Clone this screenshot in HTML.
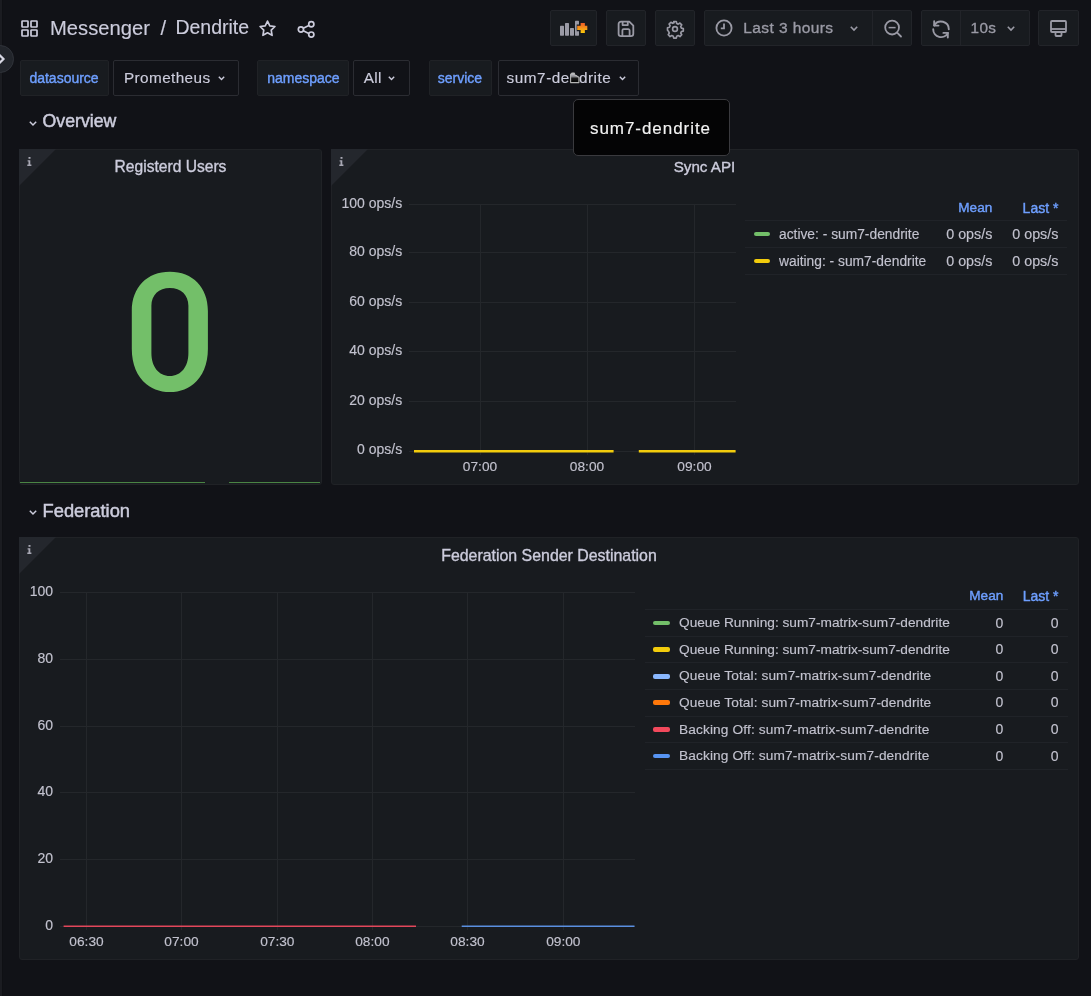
<!DOCTYPE html><html><head><meta charset="utf-8"><style>
html,body{margin:0;padding:0;width:1091px;height:996px;overflow:hidden;background:#111217;font-family:"Liberation Sans", sans-serif;}
svg{position:absolute;overflow:visible}
</style></head><body><div style="position:absolute;left:0;top:0;width:1091px;height:996px;will-change:transform">
<div style="position:absolute;left:0px;top:0px;width:2px;height:996px;background:#1b1c21;border-radius:0px;box-sizing:border-box;"></div>
<div style="position:absolute;left:2px;top:0px;width:1px;height:996px;background:#0f1014;border-radius:0px;box-sizing:border-box;"></div>
<div style="position:absolute;left:-13.8px;top:45px;width:27.6px;height:27.6px;border-radius:50%;background:#22252b;border:1px solid #30333a;box-sizing:border-box"></div>
<svg style="left:0;top:52px" width="8" height="14" viewBox="0 0 8 14"><path d="M-1 2.5 L3.5 7 L-1 11.5" fill="none" stroke="#d8d8e4" stroke-width="2.2"/></svg>
<svg style="left:21px;top:20px" width="17" height="17" viewBox="0 0 17 17" fill="none" stroke="#ccccdc" stroke-width="1.7"><rect x="1" y="1" width="6" height="6" rx=".5"/><rect x="10" y="1" width="6" height="6" rx=".5"/><rect x="1" y="10" width="6" height="6" rx=".5"/><rect x="10" y="10" width="6" height="6" rx=".5"/></svg>
<div style="position:absolute;top:17.70px;font-size:20.2px;line-height:20.2px;color:#ccccdc;white-space:nowrap;font-weight:400;-webkit-text-stroke:0.15px #ccccdc;left:50px;">Messenger</div>
<div style="position:absolute;top:17.70px;font-size:20.2px;line-height:20.2px;color:#ccccdc;white-space:nowrap;font-weight:400;-webkit-text-stroke:0.15px #ccccdc;left:160.5px;">/</div>
<div style="position:absolute;top:18.29px;font-size:19.5px;line-height:19.5px;color:#ccccdc;white-space:nowrap;font-weight:400;-webkit-text-stroke:0.15px #ccccdc;left:175.4px;">Dendrite</div>
<svg style="left:258px;top:19px" width="19" height="19" viewBox="0 0 24 24"><path d="M12 2.6l2.9 6 6.5.9-4.7 4.6 1.1 6.5L12 17.5l-5.8 3.1 1.1-6.5-4.7-4.6 6.5-.9z" fill="none" stroke="#ccccdc" stroke-width="2.1" stroke-linejoin="round"/></svg>
<svg style="left:297.3px;top:19.5px" width="19" height="19" viewBox="0 0 19 19" fill="none" stroke="#ccccdc" stroke-width="1.7"><circle cx="14.3" cy="4.3" r="2.6"/><circle cx="3.9" cy="9.5" r="2.6"/><circle cx="14.3" cy="14.6" r="2.6"/><path d="M6.3 8.2 L11.8 5.6 M6.3 10.8 L11.8 13.4"/></svg>
<div style="position:absolute;left:550px;top:10px;width:47px;height:35.5px;background:#181b1f;border-radius:2px;box-sizing:border-box;border:1px solid #222429;"></div>
<div style="position:absolute;left:606px;top:10px;width:40px;height:35.5px;background:#181b1f;border-radius:2px;box-sizing:border-box;border:1px solid #222429;"></div>
<div style="position:absolute;left:655px;top:10px;width:40px;height:35.5px;background:#181b1f;border-radius:2px;box-sizing:border-box;border:1px solid #222429;"></div>
<div style="position:absolute;left:704px;top:10px;width:208px;height:35.5px;background:#181b1f;border-radius:2px;box-sizing:border-box;border:1px solid #222429;"></div>
<div style="position:absolute;left:872px;top:10px;width:1px;height:35.5px;background:#222429"></div>
<div style="position:absolute;left:921px;top:10px;width:109px;height:35.5px;background:#181b1f;border-radius:2px;box-sizing:border-box;border:1px solid #222429;"></div>
<div style="position:absolute;left:960px;top:10px;width:1px;height:35.5px;background:#222429"></div>
<div style="position:absolute;left:1038px;top:10px;width:40.5px;height:35.5px;background:#181b1f;border-radius:2px;box-sizing:border-box;border:1px solid #222429;"></div>
<svg style="left:559px;top:20px" width="30" height="18" viewBox="0 0 30 18"><defs><linearGradient id="og" x1="0" y1="0" x2="0" y2="1"><stop offset="0" stop-color="#f05a28"/><stop offset="1" stop-color="#fbca0a"/></linearGradient></defs><rect x="1" y="5.8" width="4" height="9.9" rx=".6" fill="#9a9aa5"/><rect x="6" y="2.9" width="4" height="12.8" rx=".6" fill="#9a9aa5"/><rect x="11" y="8" width="4" height="7.7" rx=".6" fill="#9a9aa5"/><rect x="16" y="0.7" width="4" height="15" rx=".6" fill="#9a9aa5"/><path d="M23.75 1.4v12.1M17.7 7.9h12.1" stroke="#181b1f" stroke-width="6.6"/><path d="M23.75 2.9v10M18.2 7.9h10.1" stroke="url(#og)" stroke-width="4.2"/></svg>
<svg style="left:617px;top:19.8px" width="18" height="18" viewBox="0 0 18 18" fill="none" stroke="#9a9aa5" stroke-width="1.8" stroke-linejoin="round"><path d="M4 1.6H12.3L16.3 5.6V13.8A2.4 2.4 0 0 1 13.9 16.2H4A2.4 2.4 0 0 1 1.6 13.8V4A2.4 2.4 0 0 1 4 1.6Z"/><path d="M5.6 1.6V5.1H10.8V1.6"/><path d="M5.4 16.2V10.4A1.2 1.2 0 0 1 6.6 9.2H11.4A1.2 1.2 0 0 1 12.6 10.4V16.2"/></svg>
<svg style="left:665.5px;top:19.5px" width="18" height="18" viewBox="0 0 24 24" fill="none" stroke="#9a9aa5" stroke-width="2.2" stroke-linejoin="round"><circle cx="12" cy="12" r="3.2"/><path d="M10.3 2h3.4l.6 2.6 2 .9 2.3-1.4 2.4 2.4-1.4 2.3.9 2 2.6.6v3.4l-2.6.6-.9 2 1.4 2.3-2.4 2.4-2.3-1.4-2 .9-.6 2.6h-3.4l-.6-2.6-2-.9-2.3 1.4-2.4-2.4 1.4-2.3-.9-2L2 13.7v-3.4l2.6-.6.9-2-1.4-2.3 2.4-2.4 2.3 1.4 2-.9z"/></svg>
<svg style="left:715px;top:19.3px" width="18" height="18" viewBox="0 0 18 18" fill="none" stroke="#9a9aa5" stroke-width="1.8"><circle cx="9" cy="9" r="7.6"/><path d="M9 4.5v4.8H5.8"/></svg>
<div style="position:absolute;top:19.88px;font-size:15.5px;line-height:15.5px;color:#9a9aa5;white-space:nowrap;font-weight:400;-webkit-text-stroke:0.35px #9a9aa5;left:743.2px;letter-spacing:0.42px;">Last 3 hours</div>
<svg style="left:850px;top:25.5px" width="8" height="5.0" viewBox="0 0 8 5.0"><path d="M0.8 0.8 L4.0 4.0 L7.2 0.8" fill="none" stroke="#9a9aa5" stroke-width="1.6"/></svg>
<svg style="left:883.5px;top:20px" width="18" height="18" viewBox="0 0 18 18" fill="none" stroke="#9a9aa5" stroke-width="1.8"><circle cx="8.1" cy="7.6" r="6.9"/><path d="M4.6 7.6h7" stroke-width="1.5"/><path d="M13.1 12.6L17 16.5" stroke-linecap="round"/></svg>
<svg style="left:928px;top:16.5px" width="26" height="26" viewBox="0 0 26 26" fill="none" stroke="#9a9aa5" stroke-width="1.9" stroke-linecap="round" stroke-linejoin="round"><path d="M6.25 8.4A7.8 7.8 0 0 1 20.8 12.3"/><path d="M6.2 4.2V8.6H10.5"/><path d="M5.2 12.3A7.8 7.8 0 0 0 19.89 15.96"/><path d="M15.4 15.9H19.8V20.5"/></svg>
<div style="position:absolute;top:20.45px;font-size:15.3px;line-height:15.3px;color:#9a9aa5;white-space:nowrap;font-weight:400;-webkit-text-stroke:0.35px #9a9aa5;left:970.5px;letter-spacing:0.4px;">10s</div>
<svg style="left:1006.5px;top:25.5px" width="8" height="5.0" viewBox="0 0 8 5.0"><path d="M0.8 0.8 L4.0 4.0 L7.2 0.8" fill="none" stroke="#9a9aa5" stroke-width="1.6"/></svg>
<svg style="left:1050px;top:19.5px" width="17" height="17" viewBox="0 0 17 17" fill="none" stroke="#9a9aa5" stroke-width="1.8" stroke-linejoin="round"><rect x="1" y="1" width="15" height="11" rx="1"/><path d="M1 9h15"/><rect x="5.5" y="12" width="6" height="4" rx=".8"/></svg>
<div style="position:absolute;left:19.5px;top:60px;width:89.0px;height:36px;background:#181b1f;border-radius:2px;box-sizing:border-box;border:1px solid #202226;"></div>
<div style="position:absolute;top:70.55px;font-size:14px;line-height:14px;color:#6e9fff;white-space:nowrap;font-weight:400;-webkit-text-stroke:0.4px #6e9fff;left:29.4px;">datasource</div>
<div style="position:absolute;left:113.4px;top:60px;width:125.6px;height:36px;background:#111217;border-radius:2px;box-sizing:border-box;border:1px solid #2b2c32;"></div>
<div style="position:absolute;top:70.15px;font-size:15.3px;line-height:15.3px;color:#ccccdc;white-space:nowrap;font-weight:400;-webkit-text-stroke:0.15px #ccccdc;left:124px;letter-spacing:0.4px;">Prometheus</div>
<svg style="left:218px;top:75.5px" width="7" height="4.5" viewBox="0 0 7 4.5"><path d="M0.8 0.8 L3.5 3.5 L6.2 0.8" fill="none" stroke="#ccccdc" stroke-width="1.4"/></svg>
<div style="position:absolute;left:257.3px;top:60px;width:91.69999999999999px;height:36px;background:#181b1f;border-radius:2px;box-sizing:border-box;border:1px solid #202226;"></div>
<div style="position:absolute;top:70.55px;font-size:14px;line-height:14px;color:#6e9fff;white-space:nowrap;font-weight:400;-webkit-text-stroke:0.4px #6e9fff;left:267.2px;">namespace</div>
<div style="position:absolute;left:353.4px;top:60px;width:56.60000000000002px;height:36px;background:#111217;border-radius:2px;box-sizing:border-box;border:1px solid #2b2c32;"></div>
<div style="position:absolute;top:70.15px;font-size:15.3px;line-height:15.3px;color:#ccccdc;white-space:nowrap;font-weight:400;-webkit-text-stroke:0.15px #ccccdc;left:363.7px;letter-spacing:0.35px;">All</div>
<svg style="left:388px;top:75.5px" width="7" height="4.5" viewBox="0 0 7 4.5"><path d="M0.8 0.8 L3.5 3.5 L6.2 0.8" fill="none" stroke="#ccccdc" stroke-width="1.4"/></svg>
<div style="position:absolute;left:428.5px;top:60px;width:63.5px;height:36px;background:#181b1f;border-radius:2px;box-sizing:border-box;border:1px solid #202226;"></div>
<div style="position:absolute;top:70.55px;font-size:14px;line-height:14px;color:#6e9fff;white-space:nowrap;font-weight:400;-webkit-text-stroke:0.4px #6e9fff;left:437.7px;">service</div>
<div style="position:absolute;left:497.5px;top:60px;width:141.10000000000002px;height:36px;background:#111217;border-radius:2px;box-sizing:border-box;border:1px solid #2b2c32;"></div>
<div style="position:absolute;top:70.15px;font-size:15.3px;line-height:15.3px;color:#ccccdc;white-space:nowrap;font-weight:400;-webkit-text-stroke:0.15px #ccccdc;left:506.6px;letter-spacing:0.54px;">sum7-dendrite</div>
<svg style="left:618.5px;top:75.5px" width="7" height="4.5" viewBox="0 0 7 4.5"><path d="M0.8 0.8 L3.5 3.5 L6.2 0.8" fill="none" stroke="#ccccdc" stroke-width="1.4"/></svg>
<svg style="left:29px;top:120.7px" width="8" height="5.0" viewBox="0 0 8 5.0"><path d="M0.8 0.8 L4.0 4.0 L7.2 0.8" fill="none" stroke="#ccccdc" stroke-width="1.5"/></svg>
<div style="position:absolute;top:112.72px;font-size:17.7px;line-height:17.7px;color:#ccccdc;white-space:nowrap;font-weight:400;-webkit-text-stroke:0.5px #ccccdc;left:42.6px;">Overview</div>
<svg style="left:29px;top:510.29999999999995px" width="8" height="5.0" viewBox="0 0 8 5.0"><path d="M0.8 0.8 L4.0 4.0 L7.2 0.8" fill="none" stroke="#ccccdc" stroke-width="1.5"/></svg>
<div style="position:absolute;top:501.81px;font-size:18.3px;line-height:18.3px;color:#ccccdc;white-space:nowrap;font-weight:400;-webkit-text-stroke:0.5px #ccccdc;left:42.6px;">Federation</div>
<div style="position:absolute;left:19px;top:149px;width:303px;height:336px;background:#181b1f;border-radius:3px;box-sizing:border-box;border:1px solid #202226;"></div>
<svg style="left:19px;top:149px" width="37" height="37" viewBox="0 0 37 37"><path d="M0 0H37L0 37Z" fill="#24272d"/></svg>
<svg style="left:27px;top:157px" width="5" height="9" viewBox="0 0 5 9" fill="#a8a8b4"><rect x="1.5" y="0" width="2" height="1.8"/><path d="M0.6 3.2h2.7v4.4h1.1V9H0.3V7.6h1.2V4.5h-.9z"/></svg>
<div style="position:absolute;left:331px;top:149px;width:748px;height:336px;background:#181b1f;border-radius:3px;box-sizing:border-box;border:1px solid #202226;"></div>
<svg style="left:331px;top:149px" width="37" height="37" viewBox="0 0 37 37"><path d="M0 0H37L0 37Z" fill="#24272d"/></svg>
<svg style="left:339px;top:157px" width="5" height="9" viewBox="0 0 5 9" fill="#a8a8b4"><rect x="1.5" y="0" width="2" height="1.8"/><path d="M0.6 3.2h2.7v4.4h1.1V9H0.3V7.6h1.2V4.5h-.9z"/></svg>
<div style="position:absolute;left:19px;top:537px;width:1060px;height:423px;background:#181b1f;border-radius:3px;box-sizing:border-box;border:1px solid #202226;"></div>
<svg style="left:19px;top:537px" width="37" height="37" viewBox="0 0 37 37"><path d="M0 0H37L0 37Z" fill="#24272d"/></svg>
<svg style="left:27px;top:545px" width="5" height="9" viewBox="0 0 5 9" fill="#a8a8b4"><rect x="1.5" y="0" width="2" height="1.8"/><path d="M0.6 3.2h2.7v4.4h1.1V9H0.3V7.6h1.2V4.5h-.9z"/></svg>
<div style="position:absolute;top:159.29px;font-size:15.6px;line-height:15.6px;color:#ccccdc;white-space:nowrap;font-weight:400;-webkit-text-stroke:0.35px #ccccdc;left:-129.5px;width:600px;text-align:center;">Registerd Users</div>
<div style="position:absolute;top:158.93px;font-size:15.2px;line-height:15.2px;color:#ccccdc;white-space:nowrap;font-weight:400;-webkit-text-stroke:0.35px #ccccdc;left:404.5px;width:600px;text-align:center;">Sync API</div>
<div style="position:absolute;top:547.84px;font-size:15.9px;line-height:15.9px;color:#ccccdc;white-space:nowrap;font-weight:400;-webkit-text-stroke:0.35px #ccccdc;left:249px;width:600px;text-align:center;">Federation Sender Destination</div>
<svg style="left:0;top:0" width="1091" height="996" viewBox="0 0 1091 996"><path fill-rule="evenodd" fill="#73bf69" d="M169.85 271.80C192.68 271.80 207.90 287.48 207.90 311.00V349.00C207.90 374.86 192.68 392.10 169.85 392.10C147.02 392.10 131.80 374.86 131.80 349.00V311.00C131.80 287.48 147.02 271.80 169.85 271.80ZM169.90 288.00C181.00 288.00 188.40 295.08 188.40 305.70V353.10C188.40 366.90 181.00 376.10 169.90 376.10C158.80 376.10 151.40 366.90 151.40 353.10V305.70C151.40 295.08 158.80 288.00 169.90 288.00Z"/></svg>
<div style="position:absolute;left:20px;top:482px;width:185px;height:1px;background:#4a8444"></div>
<div style="position:absolute;left:229px;top:482px;width:91px;height:1px;background:#4a8444"></div>
<svg style="left:0;top:0" width="1091" height="996" viewBox="0 0 1091 996" shape-rendering="crispEdges"><line x1="409" x2="736" y1="204.5" y2="204.5" stroke="#24272b" stroke-width="1"/><line x1="409" x2="736" y1="252.5" y2="252.5" stroke="#24272b" stroke-width="1"/><line x1="409" x2="736" y1="302.5" y2="302.5" stroke="#24272b" stroke-width="1"/><line x1="409" x2="736" y1="351.5" y2="351.5" stroke="#24272b" stroke-width="1"/><line x1="409" x2="736" y1="401.5" y2="401.5" stroke="#24272b" stroke-width="1"/><line x1="409" x2="736" y1="451.0" y2="451.0" stroke="#24272b" stroke-width="1"/><line x1="480.5" x2="480.5" y1="204" y2="455" stroke="#24272b" stroke-width="1"/><line x1="587.5" x2="587.5" y1="204" y2="455" stroke="#24272b" stroke-width="1"/><line x1="694.5" x2="694.5" y1="204" y2="455" stroke="#24272b" stroke-width="1"/></svg>
<div style="position:absolute;top:195.55px;font-size:14px;line-height:14px;color:#c2c2ce;white-space:nowrap;font-weight:400;-webkit-text-stroke:0.15px #c2c2ce;right:688.8px;text-align:right;">100 ops/s</div>
<div style="position:absolute;top:243.55px;font-size:14px;line-height:14px;color:#c2c2ce;white-space:nowrap;font-weight:400;-webkit-text-stroke:0.15px #c2c2ce;right:688.8px;text-align:right;">80 ops/s</div>
<div style="position:absolute;top:293.55px;font-size:14px;line-height:14px;color:#c2c2ce;white-space:nowrap;font-weight:400;-webkit-text-stroke:0.15px #c2c2ce;right:688.8px;text-align:right;">60 ops/s</div>
<div style="position:absolute;top:342.55px;font-size:14px;line-height:14px;color:#c2c2ce;white-space:nowrap;font-weight:400;-webkit-text-stroke:0.15px #c2c2ce;right:688.8px;text-align:right;">40 ops/s</div>
<div style="position:absolute;top:392.55px;font-size:14px;line-height:14px;color:#c2c2ce;white-space:nowrap;font-weight:400;-webkit-text-stroke:0.15px #c2c2ce;right:688.8px;text-align:right;">20 ops/s</div>
<div style="position:absolute;top:442.05px;font-size:14px;line-height:14px;color:#c2c2ce;white-space:nowrap;font-weight:400;-webkit-text-stroke:0.15px #c2c2ce;right:688.8px;text-align:right;">0 ops/s</div>
<div style="position:absolute;top:460.00px;font-size:13.7px;line-height:13.7px;color:#c2c2ce;white-space:nowrap;font-weight:400;-webkit-text-stroke:0.15px #c2c2ce;left:180px;width:600px;text-align:center;">07:00</div>
<div style="position:absolute;top:460.00px;font-size:13.7px;line-height:13.7px;color:#c2c2ce;white-space:nowrap;font-weight:400;-webkit-text-stroke:0.15px #c2c2ce;left:287px;width:600px;text-align:center;">08:00</div>
<div style="position:absolute;top:460.00px;font-size:13.7px;line-height:13.7px;color:#c2c2ce;white-space:nowrap;font-weight:400;-webkit-text-stroke:0.15px #c2c2ce;left:394.5px;width:600px;text-align:center;">09:00</div>
<svg style="left:0;top:0" width="1091" height="996"><path d="M414 451.3H613.6M638.8 451.3H735.6" stroke="#f2cc0c" stroke-width="2.5"/></svg>
<div style="position:absolute;top:201.39px;font-size:13.6px;line-height:13.6px;color:#6e9fff;white-space:nowrap;font-weight:400;-webkit-text-stroke:0.4px #6e9fff;right:98.70000000000005px;text-align:right;">Mean</div>
<div style="position:absolute;top:200.85px;font-size:14px;line-height:14px;color:#6e9fff;white-space:nowrap;font-weight:400;-webkit-text-stroke:0.4px #6e9fff;right:32.59999999999991px;text-align:right;">Last *</div>
<div style="position:absolute;left:745px;top:219.7px;width:322px;height:1px;background:#202328"></div>
<div style="position:absolute;left:745px;top:247.1px;width:322px;height:1px;background:#202328"></div>
<div style="position:absolute;left:745px;top:274.0px;width:322px;height:1px;background:#202328"></div>
<div style="position:absolute;left:754px;top:231.8px;width:15.6px;height:4.4px;border-radius:2px;background:#73bf69"></div>
<div style="position:absolute;top:228.32px;font-size:13.8px;line-height:13.8px;color:#c2c2ce;white-space:nowrap;font-weight:400;-webkit-text-stroke:0.15px #c2c2ce;left:779px;">active: - sum7-dendrite</div>
<div style="position:absolute;top:226.90px;font-size:14.3px;line-height:14.3px;color:#c2c2ce;white-space:nowrap;font-weight:400;-webkit-text-stroke:0.15px #c2c2ce;right:98.70000000000005px;text-align:right;">0 ops/s</div>
<div style="position:absolute;top:226.90px;font-size:14.3px;line-height:14.3px;color:#c2c2ce;white-space:nowrap;font-weight:400;-webkit-text-stroke:0.15px #c2c2ce;right:32.59999999999991px;text-align:right;">0 ops/s</div>
<div style="position:absolute;left:754px;top:258.8px;width:15.6px;height:4.4px;border-radius:2px;background:#f2cc0c"></div>
<div style="position:absolute;top:255.32px;font-size:13.8px;line-height:13.8px;color:#c2c2ce;white-space:nowrap;font-weight:400;-webkit-text-stroke:0.15px #c2c2ce;left:779px;">waiting: - sum7-dendrite</div>
<div style="position:absolute;top:253.90px;font-size:14.3px;line-height:14.3px;color:#c2c2ce;white-space:nowrap;font-weight:400;-webkit-text-stroke:0.15px #c2c2ce;right:98.70000000000005px;text-align:right;">0 ops/s</div>
<div style="position:absolute;top:253.90px;font-size:14.3px;line-height:14.3px;color:#c2c2ce;white-space:nowrap;font-weight:400;-webkit-text-stroke:0.15px #c2c2ce;right:32.59999999999991px;text-align:right;">0 ops/s</div>
<svg style="left:0;top:0" width="1091" height="996" viewBox="0 0 1091 996" shape-rendering="crispEdges"><line x1="59.6" x2="635" y1="592.5" y2="592.5" stroke="#24272b" stroke-width="1"/><line x1="59.6" x2="635" y1="659.5" y2="659.5" stroke="#24272b" stroke-width="1"/><line x1="59.6" x2="635" y1="726.5" y2="726.5" stroke="#24272b" stroke-width="1"/><line x1="59.6" x2="635" y1="792.5" y2="792.5" stroke="#24272b" stroke-width="1"/><line x1="59.6" x2="635" y1="859.5" y2="859.5" stroke="#24272b" stroke-width="1"/><line x1="59.6" x2="635" y1="926.0" y2="926.0" stroke="#24272b" stroke-width="1"/><line x1="86.5" x2="86.5" y1="592" y2="930" stroke="#24272b" stroke-width="1"/><line x1="181.5" x2="181.5" y1="592" y2="930" stroke="#24272b" stroke-width="1"/><line x1="277.3" x2="277.3" y1="592" y2="930" stroke="#24272b" stroke-width="1"/><line x1="372.4" x2="372.4" y1="592" y2="930" stroke="#24272b" stroke-width="1"/><line x1="467.5" x2="467.5" y1="592" y2="930" stroke="#24272b" stroke-width="1"/><line x1="563.3" x2="563.3" y1="592" y2="930" stroke="#24272b" stroke-width="1"/></svg>
<div style="position:absolute;top:584.05px;font-size:14px;line-height:14px;color:#c2c2ce;white-space:nowrap;font-weight:400;-webkit-text-stroke:0.15px #c2c2ce;right:1038px;text-align:right;">100</div>
<div style="position:absolute;top:651.05px;font-size:14px;line-height:14px;color:#c2c2ce;white-space:nowrap;font-weight:400;-webkit-text-stroke:0.15px #c2c2ce;right:1038px;text-align:right;">80</div>
<div style="position:absolute;top:718.05px;font-size:14px;line-height:14px;color:#c2c2ce;white-space:nowrap;font-weight:400;-webkit-text-stroke:0.15px #c2c2ce;right:1038px;text-align:right;">60</div>
<div style="position:absolute;top:784.05px;font-size:14px;line-height:14px;color:#c2c2ce;white-space:nowrap;font-weight:400;-webkit-text-stroke:0.15px #c2c2ce;right:1038px;text-align:right;">40</div>
<div style="position:absolute;top:851.05px;font-size:14px;line-height:14px;color:#c2c2ce;white-space:nowrap;font-weight:400;-webkit-text-stroke:0.15px #c2c2ce;right:1038px;text-align:right;">20</div>
<div style="position:absolute;top:917.55px;font-size:14px;line-height:14px;color:#c2c2ce;white-space:nowrap;font-weight:400;-webkit-text-stroke:0.15px #c2c2ce;right:1038px;text-align:right;">0</div>
<div style="position:absolute;top:934.90px;font-size:13.7px;line-height:13.7px;color:#c2c2ce;white-space:nowrap;font-weight:400;-webkit-text-stroke:0.15px #c2c2ce;left:-213.5px;width:600px;text-align:center;">06:30</div>
<div style="position:absolute;top:934.90px;font-size:13.7px;line-height:13.7px;color:#c2c2ce;white-space:nowrap;font-weight:400;-webkit-text-stroke:0.15px #c2c2ce;left:-118.5px;width:600px;text-align:center;">07:00</div>
<div style="position:absolute;top:934.90px;font-size:13.7px;line-height:13.7px;color:#c2c2ce;white-space:nowrap;font-weight:400;-webkit-text-stroke:0.15px #c2c2ce;left:-22.69999999999999px;width:600px;text-align:center;">07:30</div>
<div style="position:absolute;top:934.90px;font-size:13.7px;line-height:13.7px;color:#c2c2ce;white-space:nowrap;font-weight:400;-webkit-text-stroke:0.15px #c2c2ce;left:72.39999999999998px;width:600px;text-align:center;">08:00</div>
<div style="position:absolute;top:934.90px;font-size:13.7px;line-height:13.7px;color:#c2c2ce;white-space:nowrap;font-weight:400;-webkit-text-stroke:0.15px #c2c2ce;left:167.5px;width:600px;text-align:center;">08:30</div>
<div style="position:absolute;top:934.90px;font-size:13.7px;line-height:13.7px;color:#c2c2ce;white-space:nowrap;font-weight:400;-webkit-text-stroke:0.15px #c2c2ce;left:263.29999999999995px;width:600px;text-align:center;">09:00</div>
<svg style="left:0;top:0" width="1091" height="996"><path d="M63.6 926.2H416" stroke="#e2475b" stroke-width="1.6"/><path d="M461.7 926.2H634.5" stroke="#5a8fe0" stroke-width="1.6"/></svg>
<div style="position:absolute;top:589.39px;font-size:13.6px;line-height:13.6px;color:#6e9fff;white-space:nowrap;font-weight:400;-webkit-text-stroke:0.4px #6e9fff;right:87.70000000000005px;text-align:right;">Mean</div>
<div style="position:absolute;top:588.85px;font-size:14px;line-height:14px;color:#6e9fff;white-space:nowrap;font-weight:400;-webkit-text-stroke:0.4px #6e9fff;right:32.5px;text-align:right;">Last *</div>
<div style="position:absolute;left:645px;top:609.2px;width:422.5px;height:1px;background:#202328"></div>
<div style="position:absolute;left:645px;top:635.8px;width:422.5px;height:1px;background:#202328"></div>
<div style="position:absolute;left:645px;top:662.4px;width:422.5px;height:1px;background:#202328"></div>
<div style="position:absolute;left:645px;top:689.0px;width:422.5px;height:1px;background:#202328"></div>
<div style="position:absolute;left:645px;top:715.5px;width:422.5px;height:1px;background:#202328"></div>
<div style="position:absolute;left:645px;top:742.1px;width:422.5px;height:1px;background:#202328"></div>
<div style="position:absolute;left:645px;top:768.7px;width:422.5px;height:1px;background:#202328"></div>
<div style="position:absolute;left:653px;top:620.6px;width:17.2px;height:4.8px;border-radius:2px;background:#73bf69"></div>
<div style="position:absolute;top:616.19px;font-size:13.7px;line-height:13.7px;color:#c2c2ce;white-space:nowrap;font-weight:400;-webkit-text-stroke:0.15px #c2c2ce;left:679px;letter-spacing:0px;">Queue Running: sum7-matrix-sum7-dendrite</div>
<div style="position:absolute;top:615.74px;font-size:14px;line-height:14px;color:#c2c2ce;white-space:nowrap;font-weight:400;-webkit-text-stroke:0.15px #c2c2ce;right:87.70000000000005px;text-align:right;">0</div>
<div style="position:absolute;top:615.74px;font-size:14px;line-height:14px;color:#c2c2ce;white-space:nowrap;font-weight:400;-webkit-text-stroke:0.15px #c2c2ce;right:32.5px;text-align:right;">0</div>
<div style="position:absolute;left:653px;top:647.2px;width:17.2px;height:4.8px;border-radius:2px;background:#f2cc0c"></div>
<div style="position:absolute;top:642.78px;font-size:13.7px;line-height:13.7px;color:#c2c2ce;white-space:nowrap;font-weight:400;-webkit-text-stroke:0.15px #c2c2ce;left:679px;letter-spacing:0px;">Queue Running: sum7-matrix-sum7-dendrite</div>
<div style="position:absolute;top:642.32px;font-size:14px;line-height:14px;color:#c2c2ce;white-space:nowrap;font-weight:400;-webkit-text-stroke:0.15px #c2c2ce;right:87.70000000000005px;text-align:right;">0</div>
<div style="position:absolute;top:642.32px;font-size:14px;line-height:14px;color:#c2c2ce;white-space:nowrap;font-weight:400;-webkit-text-stroke:0.15px #c2c2ce;right:32.5px;text-align:right;">0</div>
<div style="position:absolute;left:653px;top:673.8px;width:17.2px;height:4.8px;border-radius:2px;background:#8ab8ff"></div>
<div style="position:absolute;top:669.36px;font-size:13.7px;line-height:13.7px;color:#c2c2ce;white-space:nowrap;font-weight:400;-webkit-text-stroke:0.15px #c2c2ce;left:679px;letter-spacing:0.1px;">Queue Total: sum7-matrix-sum7-dendrite</div>
<div style="position:absolute;top:668.91px;font-size:14px;line-height:14px;color:#c2c2ce;white-space:nowrap;font-weight:400;-webkit-text-stroke:0.15px #c2c2ce;right:87.70000000000005px;text-align:right;">0</div>
<div style="position:absolute;top:668.91px;font-size:14px;line-height:14px;color:#c2c2ce;white-space:nowrap;font-weight:400;-webkit-text-stroke:0.15px #c2c2ce;right:32.5px;text-align:right;">0</div>
<div style="position:absolute;left:653px;top:700.3px;width:17.2px;height:4.8px;border-radius:2px;background:#ff780a"></div>
<div style="position:absolute;top:695.94px;font-size:13.7px;line-height:13.7px;color:#c2c2ce;white-space:nowrap;font-weight:400;-webkit-text-stroke:0.15px #c2c2ce;left:679px;letter-spacing:0.1px;">Queue Total: sum7-matrix-sum7-dendrite</div>
<div style="position:absolute;top:695.49px;font-size:14px;line-height:14px;color:#c2c2ce;white-space:nowrap;font-weight:400;-webkit-text-stroke:0.15px #c2c2ce;right:87.70000000000005px;text-align:right;">0</div>
<div style="position:absolute;top:695.49px;font-size:14px;line-height:14px;color:#c2c2ce;white-space:nowrap;font-weight:400;-webkit-text-stroke:0.15px #c2c2ce;right:32.5px;text-align:right;">0</div>
<div style="position:absolute;left:653px;top:726.9px;width:17.2px;height:4.8px;border-radius:2px;background:#f2495c"></div>
<div style="position:absolute;top:722.53px;font-size:13.7px;line-height:13.7px;color:#c2c2ce;white-space:nowrap;font-weight:400;-webkit-text-stroke:0.15px #c2c2ce;left:679px;letter-spacing:0.13px;">Backing Off: sum7-matrix-sum7-dendrite</div>
<div style="position:absolute;top:722.07px;font-size:14px;line-height:14px;color:#c2c2ce;white-space:nowrap;font-weight:400;-webkit-text-stroke:0.15px #c2c2ce;right:87.70000000000005px;text-align:right;">0</div>
<div style="position:absolute;top:722.07px;font-size:14px;line-height:14px;color:#c2c2ce;white-space:nowrap;font-weight:400;-webkit-text-stroke:0.15px #c2c2ce;right:32.5px;text-align:right;">0</div>
<div style="position:absolute;left:653px;top:753.5px;width:17.2px;height:4.8px;border-radius:2px;background:#5794f2"></div>
<div style="position:absolute;top:749.11px;font-size:13.7px;line-height:13.7px;color:#c2c2ce;white-space:nowrap;font-weight:400;-webkit-text-stroke:0.15px #c2c2ce;left:679px;letter-spacing:0.13px;">Backing Off: sum7-matrix-sum7-dendrite</div>
<div style="position:absolute;top:748.66px;font-size:14px;line-height:14px;color:#c2c2ce;white-space:nowrap;font-weight:400;-webkit-text-stroke:0.15px #c2c2ce;right:87.70000000000005px;text-align:right;">0</div>
<div style="position:absolute;top:748.66px;font-size:14px;line-height:14px;color:#c2c2ce;white-space:nowrap;font-weight:400;-webkit-text-stroke:0.15px #c2c2ce;right:32.5px;text-align:right;">0</div>
<div style="position:absolute;left:573px;top:99px;width:157px;height:56.5px;background:#040405;border-radius:5px;box-sizing:border-box;border:1px solid #3a3a3e;"></div>
<div style="position:absolute;top:120.21px;font-size:17px;line-height:17px;color:#f2f2f2;white-space:nowrap;font-weight:400;-webkit-text-stroke:0.15px #f2f2f2;left:350.5px;width:600px;text-align:center;letter-spacing:0.95px;">sum7-dendrite</div>
<svg style="left:569px;top:72px" width="12" height="12" viewBox="0 0 12 12"><defs><linearGradient id="cg" x1="0" y1="0" x2="0" y2="1"><stop offset="0" stop-color="#d4d4da"/><stop offset=".35" stop-color="#8a8a90"/><stop offset=".55" stop-color="#1a1a1a"/><stop offset="1" stop-color="#000"/></linearGradient></defs><path d="M1.6 10.6V2.4L2.9 1.1H5.3L5.9 3.1L9.9 5.3V10.6Z" fill="url(#cg)" stroke="#b4b4b4" stroke-width="1.1" stroke-linejoin="round"/></svg>
</div></body></html>
